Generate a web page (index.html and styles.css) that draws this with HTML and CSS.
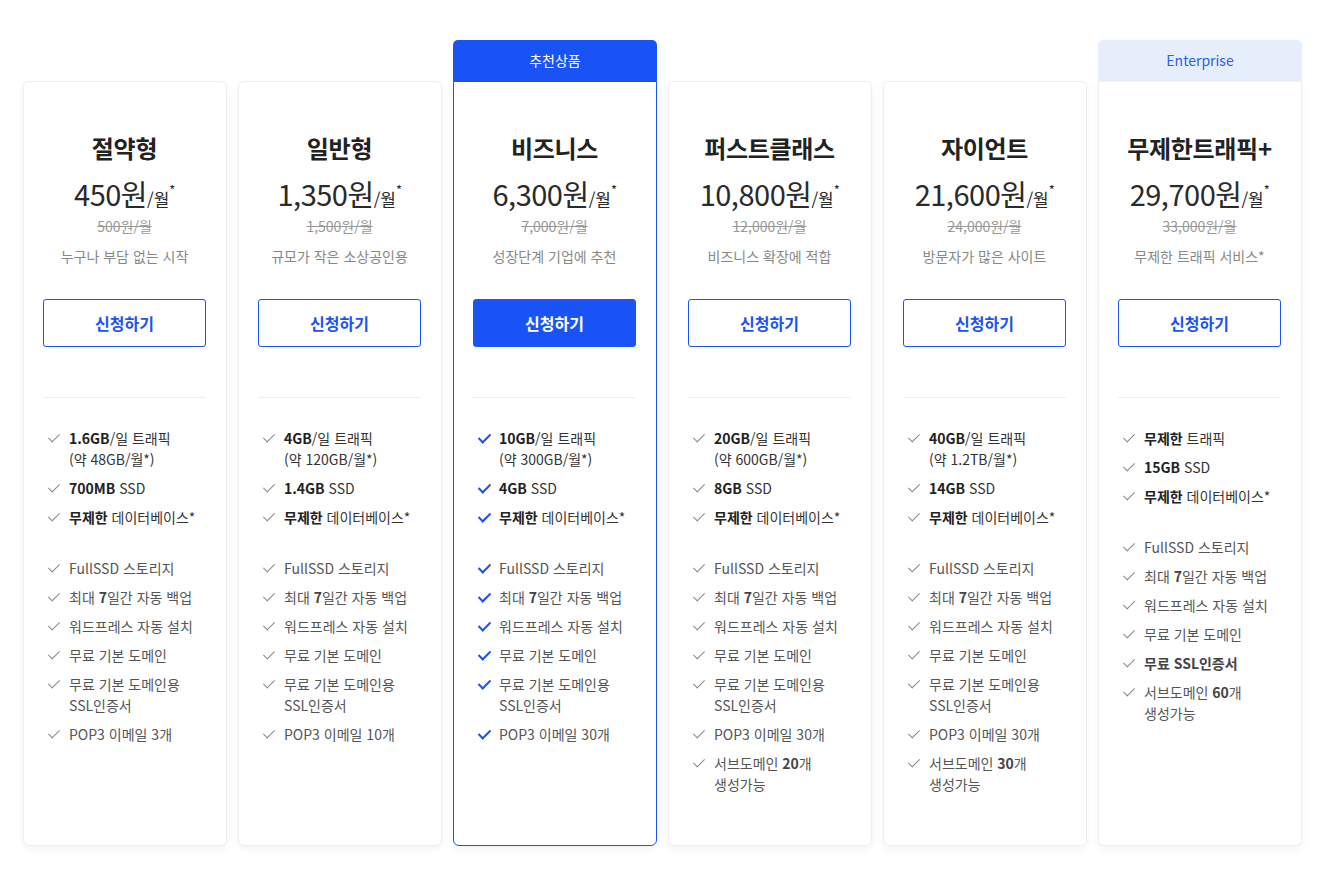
FILE: index.html
```html
<!DOCTYPE html>
<html lang="ko">
<head>
<meta charset="utf-8">
<title>호스팅 요금제</title>
<link rel="stylesheet" href="styles.css">
</head>
<body>
<div class="plans">

  <div class="plan">
    <div class="badge badge-empty"></div>
    <div class="card">
      <h2 class="name">절약형</h2>
      <div class="price">450원<span class="unit">/월</span><span class="star">*</span></div>
      <div class="old">500원/월</div>
      <div class="desc">누구나 부담 없는 시작</div>
      <a class="btn">신청하기</a>
      <hr class="divider">
      <ul class="feat main">
        <li><b>1.6GB</b>/일 트래픽<br>(약 48GB/월*)</li>
        <li><b>700MB</b> SSD</li>
        <li><b>무제한</b> 데이터베이스*</li>
      </ul>
      <ul class="feat sub">
        <li>FullSSD 스토리지</li>
        <li>최대 <b>7</b>일간 자동 백업</li>
        <li>워드프레스 자동 설치</li>
        <li>무료 기본 도메인</li>
        <li>무료 기본 도메인용<br>SSL인증서</li>
        <li>POP3 이메일 3개</li>
      </ul>
    </div>
  </div>

  <div class="plan">
    <div class="badge badge-empty"></div>
    <div class="card">
      <h2 class="name">일반형</h2>
      <div class="price">1,350원<span class="unit">/월</span><span class="star">*</span></div>
      <div class="old">1,500원/월</div>
      <div class="desc">규모가 작은 소상공인용</div>
      <a class="btn">신청하기</a>
      <hr class="divider">
      <ul class="feat main">
        <li><b>4GB</b>/일 트래픽<br>(약 120GB/월*)</li>
        <li><b>1.4GB</b> SSD</li>
        <li><b>무제한</b> 데이터베이스*</li>
      </ul>
      <ul class="feat sub">
        <li>FullSSD 스토리지</li>
        <li>최대 <b>7</b>일간 자동 백업</li>
        <li>워드프레스 자동 설치</li>
        <li>무료 기본 도메인</li>
        <li>무료 기본 도메인용<br>SSL인증서</li>
        <li>POP3 이메일 10개</li>
      </ul>
    </div>
  </div>

  <div class="plan featured">
    <div class="badge badge-blue">추천상품</div>
    <div class="card">
      <h2 class="name">비즈니스</h2>
      <div class="price">6,300원<span class="unit">/월</span><span class="star">*</span></div>
      <div class="old">7,000원/월</div>
      <div class="desc">성장단계 기업에 추천</div>
      <a class="btn btn-solid">신청하기</a>
      <hr class="divider">
      <ul class="feat main">
        <li><b>10GB</b>/일 트래픽<br>(약 300GB/월*)</li>
        <li><b>4GB</b> SSD</li>
        <li><b>무제한</b> 데이터베이스*</li>
      </ul>
      <ul class="feat sub">
        <li>FullSSD 스토리지</li>
        <li>최대 <b>7</b>일간 자동 백업</li>
        <li>워드프레스 자동 설치</li>
        <li>무료 기본 도메인</li>
        <li>무료 기본 도메인용<br>SSL인증서</li>
        <li>POP3 이메일 30개</li>
      </ul>
    </div>
  </div>

  <div class="plan">
    <div class="badge badge-empty"></div>
    <div class="card">
      <h2 class="name">퍼스트클래스</h2>
      <div class="price">10,800원<span class="unit">/월</span><span class="star">*</span></div>
      <div class="old">12,000원/월</div>
      <div class="desc">비즈니스 확장에 적합</div>
      <a class="btn">신청하기</a>
      <hr class="divider">
      <ul class="feat main">
        <li><b>20GB</b>/일 트래픽<br>(약 600GB/월*)</li>
        <li><b>8GB</b> SSD</li>
        <li><b>무제한</b> 데이터베이스*</li>
      </ul>
      <ul class="feat sub">
        <li>FullSSD 스토리지</li>
        <li>최대 <b>7</b>일간 자동 백업</li>
        <li>워드프레스 자동 설치</li>
        <li>무료 기본 도메인</li>
        <li>무료 기본 도메인용<br>SSL인증서</li>
        <li>POP3 이메일 30개</li>
        <li>서브도메인 <b>20</b>개<br>생성가능</li>
      </ul>
    </div>
  </div>

  <div class="plan">
    <div class="badge badge-empty"></div>
    <div class="card">
      <h2 class="name">자이언트</h2>
      <div class="price">21,600원<span class="unit">/월</span><span class="star">*</span></div>
      <div class="old">24,000원/월</div>
      <div class="desc">방문자가 많은 사이트</div>
      <a class="btn">신청하기</a>
      <hr class="divider">
      <ul class="feat main">
        <li><b>40GB</b>/일 트래픽<br>(약 1.2TB/월*)</li>
        <li><b>14GB</b> SSD</li>
        <li><b>무제한</b> 데이터베이스*</li>
      </ul>
      <ul class="feat sub">
        <li>FullSSD 스토리지</li>
        <li>최대 <b>7</b>일간 자동 백업</li>
        <li>워드프레스 자동 설치</li>
        <li>무료 기본 도메인</li>
        <li>무료 기본 도메인용<br>SSL인증서</li>
        <li>POP3 이메일 30개</li>
        <li>서브도메인 <b>30</b>개<br>생성가능</li>
      </ul>
    </div>
  </div>

  <div class="plan enterprise">
    <div class="badge badge-light">Enterprise</div>
    <div class="card">
      <h2 class="name">무제한트래픽+</h2>
      <div class="price">29,700원<span class="unit">/월</span><span class="star">*</span></div>
      <div class="old">33,000원/월</div>
      <div class="desc">무제한 트래픽 서비스*</div>
      <a class="btn">신청하기</a>
      <hr class="divider">
      <ul class="feat main">
        <li><b>무제한</b> 트래픽</li>
        <li><b>15GB</b> SSD</li>
        <li><b>무제한</b> 데이터베이스*</li>
      </ul>
      <ul class="feat sub">
        <li>FullSSD 스토리지</li>
        <li>최대 <b>7</b>일간 자동 백업</li>
        <li>워드프레스 자동 설치</li>
        <li>무료 기본 도메인</li>
        <li><b>무료 SSL인증서</b></li>
        <li>서브도메인 <b>60</b>개<br>생성가능</li>
      </ul>
    </div>
  </div>

</div>
</body>
</html>
```

FILE: styles.css
```css
* { box-sizing: border-box; }

body {
  margin: 0;
  background: #ffffff;
  font-family: "Noto Sans CJK KR", "Noto Sans", sans-serif;
  color: #222;
}

.plans {
  display: flex;
  align-items: flex-start;
  gap: 11px;
  padding: 40px 0 24px 23px;
}

.plan {
  width: 204px;
  display: flex;
  flex-direction: column;
}

.badge {
  height: 41px;
  font-size: 14px;
  line-height: 41px;
  text-align: center;
  border-radius: 5px 5px 0 0;
}
.badge-blue { background: #1a53f5; color: #fff; }
.badge-light { background: #e6eefc; color: #2a5ff0; }

.card {
  flex: none;
  height: 765px;
  background: #fff;
  border: 1px solid #efefef;
  border-radius: 6px;
  box-shadow: 0 3px 9px rgba(0, 0, 0, 0.05);
  padding: 49px 20px 20px 19px;
  text-align: center;
}

.featured .card {
  border: 1px solid #1a53f5;
  border-radius: 0 0 6px 6px;
}
.enterprise .card {
  border-top-color: #eef2fb;
  border-radius: 0 0 6px 6px;
}

.name {
  margin: 0;
  font-size: 24px;
  font-weight: 700;
  line-height: 34px;
  color: #222;
  letter-spacing: -0.3px;
}

.price {
  margin-top: 6px;
  height: 44px;
  font-size: 29px;
  line-height: 44px;
  color: #2a2a2a;
  letter-spacing: -0.5px;
}
.price .unit {
  font-size: 17px;
  letter-spacing: 0;
}
.price .star {
  display: inline-block;
  font-size: 13px;
  line-height: 0;
  vertical-align: baseline;
  position: relative;
  top: -11px;
}

.old {
  margin-top: 0;
  font-size: 14px;
  line-height: 22px;
  color: #999;
  text-decoration: line-through;
}

.desc {
  margin-top: 8px;
  font-size: 14px;
  line-height: 22px;
  color: #888;
}

.btn {
  display: block;
  margin-top: 32px;
  height: 48px;
  line-height: 46px;
  border: 1px solid #1a53f5;
  border-radius: 3px;
  color: #1a53f5;
  font-size: 16px;
  font-weight: 700;
}
.btn-solid {
  background: #1a53f5;
  color: #fff;
}

.divider {
  margin: 50px 0 0;
  border: none;
  border-top: 1px solid #eeeeee;
}

.feat {
  list-style: none;
  margin: 0;
  padding: 0 0 0 6px;
  text-align: left;
  font-size: 14px;
  line-height: 21px;
}
.feat.main { margin-top: 30px; color: #333; }
.feat.sub { margin-top: 30px; color: #555; }

.feat li {
  position: relative;
  padding-left: 20px;
  margin-bottom: 8px;
}
.feat li b { font-weight: 700; color: #222; }
.feat.sub li b { color: #444; }

.feat li::before {
  content: "";
  position: absolute;
  left: 2px;
  top: 3px;
  width: 5px;
  height: 10px;
  border-right: 1.5px solid #888;
  border-bottom: 1.5px solid #888;
  transform: rotate(45deg);
}
.featured .feat li::before {
  border-color: #1a53f5;
  border-width: 0 2px 2px 0;
}
```
